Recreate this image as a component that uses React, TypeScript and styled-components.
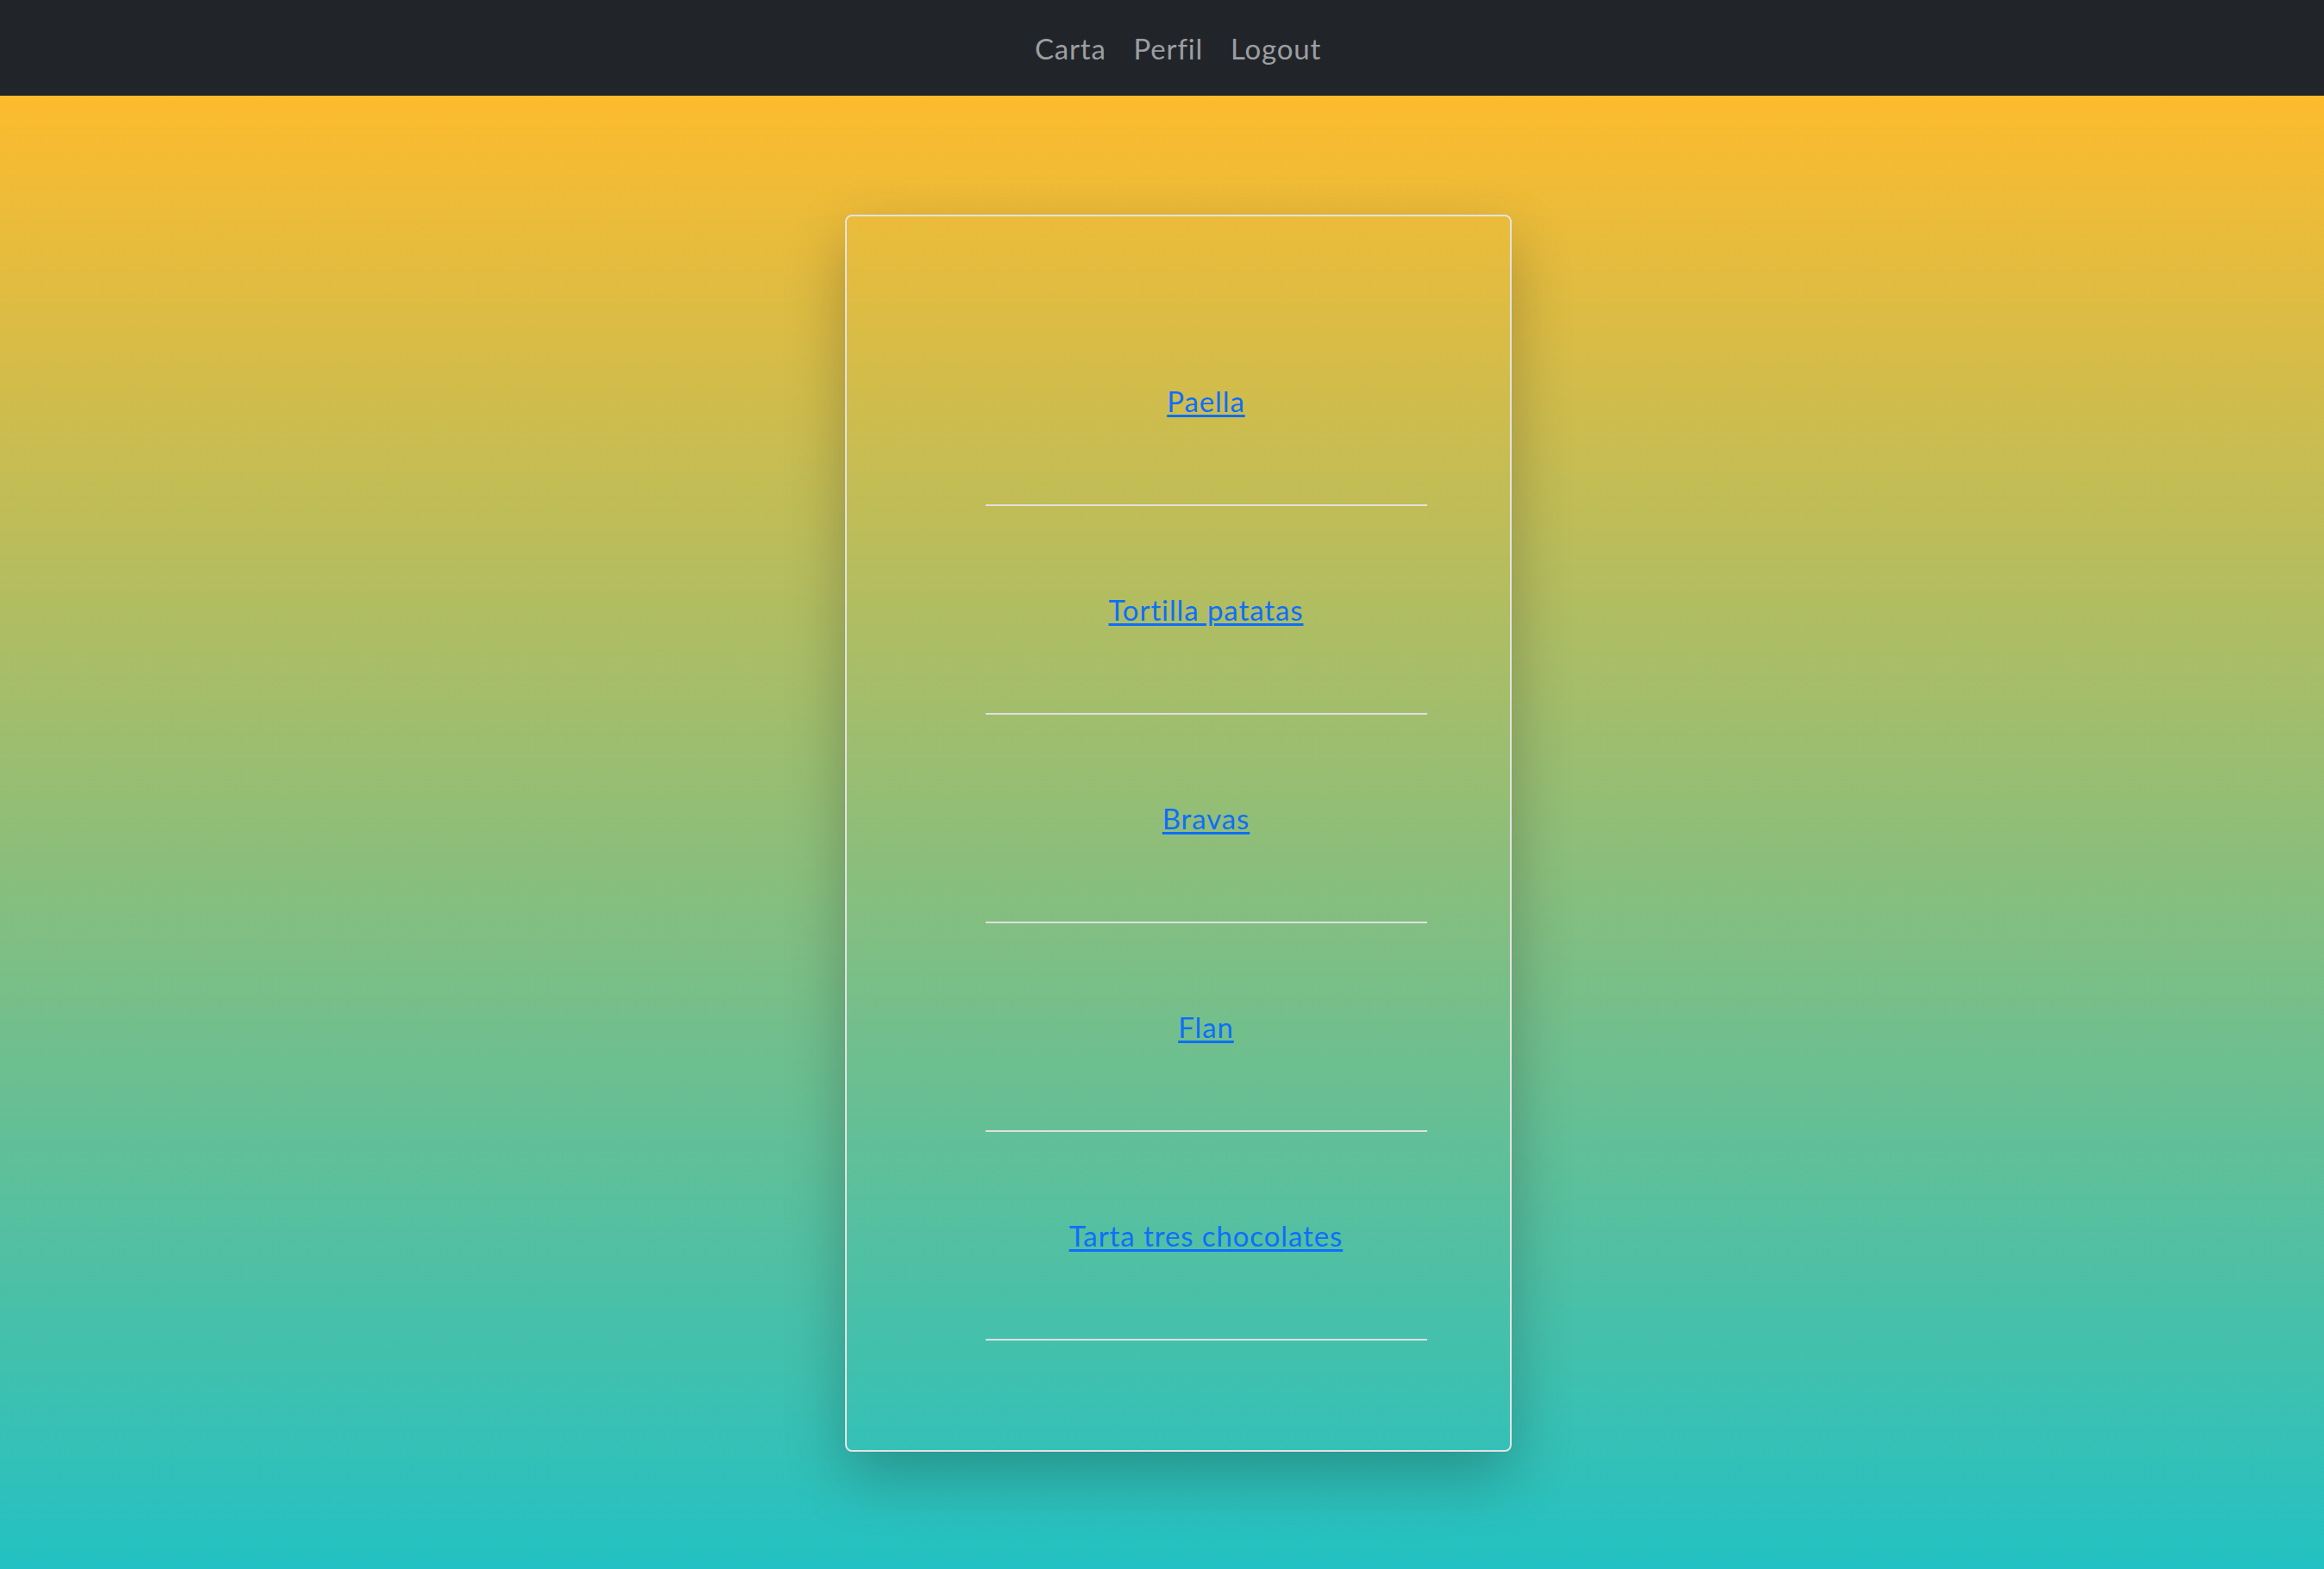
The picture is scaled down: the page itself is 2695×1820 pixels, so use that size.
import React from 'react';
import styled, { createGlobalStyle } from 'styled-components';

const GlobalStyle = createGlobalStyle`
  html, body {
    margin: 0;
    padding: 0;
  }
  body {
    font-family: Lato, "Open Sans", "Liberation Sans", sans-serif;
    background: #22c1c3;
  }
`;

const Page = styled.div`
  min-height: 1820px;
  display: flex;
  flex-direction: column;
`;

const NavBar = styled.nav`
  height: 111px;
  background-color: #212529;
  display: flex;
  justify-content: center;
  align-items: center;
  padding-left: 37px;
`;

const NavLink = styled.a`
  color: #9c9ea1;
  font-size: 33px;
  letter-spacing: 0.8px;
  padding: 0 16px;
  text-decoration: none;
  cursor: pointer;
`;

const Main = styled.main`
  flex: 1;
  background: linear-gradient(180deg, #fdbb2d 0%, #22c1c3 100%);
  display: flex;
  justify-content: center;
  align-items: flex-start;
  padding: 138px 0 0 37px;
`;

const Card = styled.div`
  width: 773px;
  box-sizing: border-box;
  border: 2px solid #e2e2e2;
  border-radius: 8px;
  box-shadow: 0 28px 70px rgba(0, 0, 0, 0.24);
  padding: 94px 0 127px;
`;

const DishList = styled.ul`
  list-style: none;
  margin: 0;
  padding: 0 0 0 65px;
`;

const DishItem = styled.li`
  display: flex;
  flex-direction: column;
  align-items: center;
`;

const DishLink = styled.a`
  display: block;
  padding: 97px 0;
  font-size: 33px;
  line-height: 46px;
  letter-spacing: 0.9px;
  color: #0d6efd;
  text-decoration: underline;
  text-decoration-thickness: 3px;
  text-underline-offset: 3px;
`;

const Divider = styled.hr`
  width: 512px;
  margin: 0;
  border: none;
  border-top: 2px solid #e0e0e0;
`;

const dishes = ['Paella', 'Tortilla patatas', 'Bravas', 'Flan', 'Tarta tres chocolates'];

export default function App() {
  return (
    <Page>
      <GlobalStyle />
      <NavBar>
        <NavLink>Carta</NavLink>
        <NavLink>Perfil</NavLink>
        <NavLink>Logout</NavLink>
      </NavBar>
      <Main>
        <Card>
          <DishList>
            {dishes.map(dish => (
              <DishItem key={dish}>
                <DishLink href="#">{dish}</DishLink>
                <Divider />
              </DishItem>
            ))}
          </DishList>
        </Card>
      </Main>
    </Page>
  );
}
